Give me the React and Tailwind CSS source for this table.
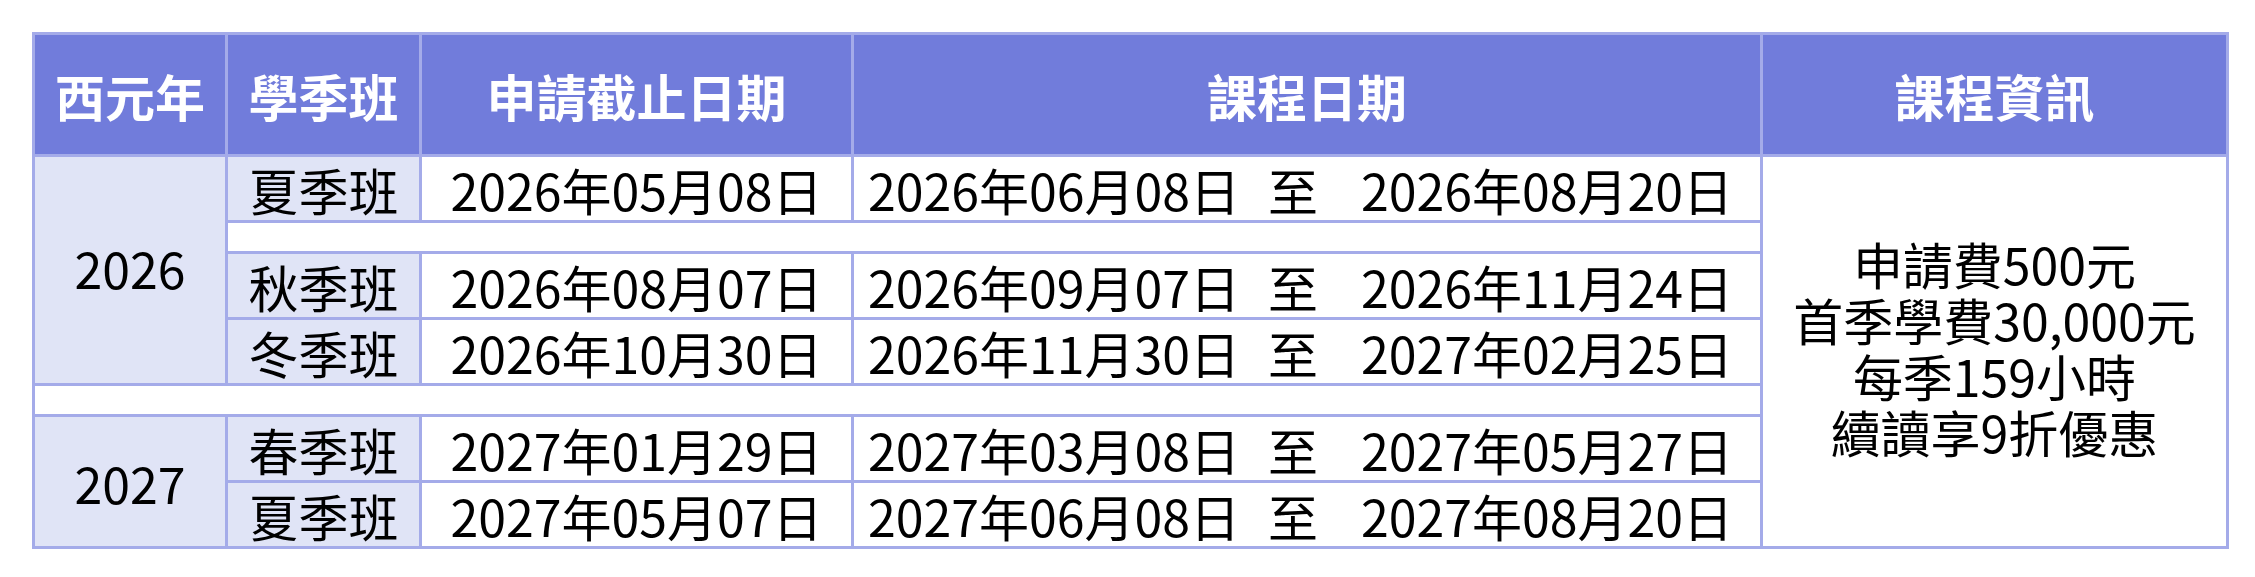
const rows2026 = [
  { season: '夏季班', deadline: '2026年05月08日', start: '2026年06月08日', end: '2026年08月20日' },
  { season: '秋季班', deadline: '2026年08月07日', start: '2026年09月07日', end: '2026年11月24日' },
  { season: '冬季班', deadline: '2026年10月30日', start: '2026年11月30日', end: '2027年02月25日' },
];

const rows2027 = [
  { season: '春季班', deadline: '2027年01月29日', start: '2027年03月08日', end: '2027年05月27日' },
  { season: '夏季班', deadline: '2027年05月07日', start: '2027年06月08日', end: '2027年08月20日' },
];

const cell = 'border-[3px] border-[#a4abe9] p-0';
const th = `${cell} bg-[#717cdb] text-white font-bold text-center`;
const shaded = `${cell} bg-[#e0e4f6] text-center`;

function Range({ start, end }) {
  return (
    <div className="flex items-center pl-[14px]">
      <span>{start}</span>
      <span className="ml-[28px] mr-[43px]">至</span>
      <span>{end}</span>
    </div>
  );
}

export default function App() {
  return (
    <div className="w-[2255px] h-[577px] bg-white pt-[32px] pl-[32px] text-black text-[50px] leading-none font-['Noto_Sans_CJK_TC','Noto_Sans_CJK_JP',sans-serif]">
      <table className="table-fixed border-collapse w-[2194px]">
        <colgroup>
          <col className="w-[193px]" />
          <col className="w-[194px]" />
          <col className="w-[432px]" />
          <col className="w-[909px]" />
          <col className="w-[466px]" />
        </colgroup>
        <thead>
          <tr className="h-[122px]">
            <th className={th}>西元年</th>
            <th className={th}>學季班</th>
            <th className={th}>申請截止日期</th>
            <th className={th}>課程日期</th>
            <th className={th}>課程資訊</th>
          </tr>
        </thead>
        <tbody>
          <tr className="h-[66px]">
            <td rowSpan={4} className={`${shaded} pb-[6px]`}>2026</td>
            <td className={shaded}>{rows2026[0].season}</td>
            <td className={`${cell} text-center`}>{rows2026[0].deadline}</td>
            <td className={cell}><Range start={rows2026[0].start} end={rows2026[0].end} /></td>
            <td rowSpan={8} className={`${cell} text-center`}>
              <div className="leading-[56px] pb-[10px]">
                申請費500元<br />
                首季學費30,000元<br />
                每季159小時<br />
                續讀享9折優惠
              </div>
            </td>
          </tr>
          <tr className="h-[31px]">
            <td colSpan={3} className={cell}></td>
          </tr>
          {rows2026.slice(1).map((r) => (
            <tr key={r.deadline} className="h-[66px]">
              <td className={shaded}>{r.season}</td>
              <td className={`${cell} text-center`}>{r.deadline}</td>
              <td className={cell}><Range start={r.start} end={r.end} /></td>
            </tr>
          ))}
          <tr className="h-[31px]">
            <td colSpan={4} className={cell}></td>
          </tr>
          {rows2027.map((r, i) => (
            <tr key={r.deadline} className="h-[66px]">
              {i === 0 && <td rowSpan={2} className={shaded}>2027</td>}
              <td className={shaded}>{r.season}</td>
              <td className={`${cell} text-center`}>{r.deadline}</td>
              <td className={cell}><Range start={r.start} end={r.end} /></td>
            </tr>
          ))}
        </tbody>
      </table>
    </div>
  );
}
